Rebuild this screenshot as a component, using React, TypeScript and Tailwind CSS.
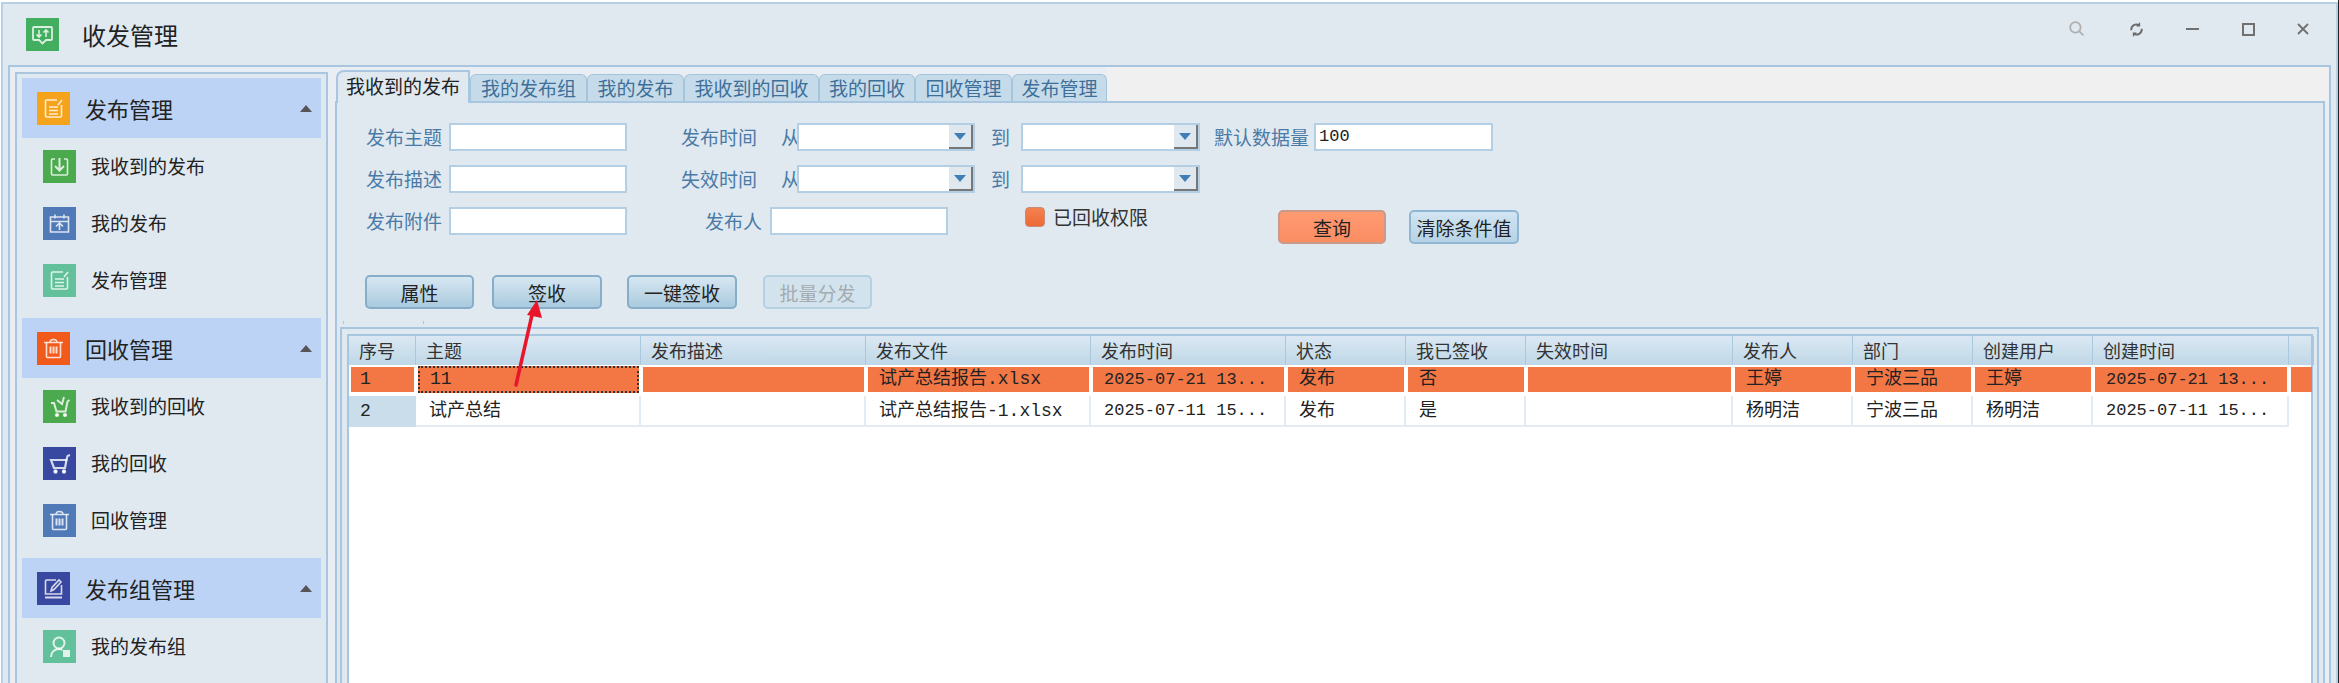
import React from 'react';

type IconKind = 'note' | 'inbox' | 'calendar' | 'trash' | 'cartFull' | 'cart' | 'pen' | 'user' | 'chat';

function TileIcon({ kind, color }: { kind: IconKind; color: string }) {
  return (
    <div className={`flex h-[33px] w-[33px] shrink-0 items-center justify-center ${color}`}>
      <svg viewBox="0 0 33 33" className="h-[33px] w-[33px]" fill="none" stroke="#ffffff" strokeOpacity="0.8" strokeWidth="1.6">
        {kind === 'note' && (
          <>
            <path d="M20 8H9.5a1 1 0 0 0-1 1v15a1 1 0 0 0 1 1h14a1 1 0 0 0 1-1V13" />
            <path d="M21 13l4-5" />
            <path d="M12 15h9M12 18.5h9M12 22h9" />
          </>
        )}
        {kind === 'inbox' && (
          <>
            <path d="M12 9H9.500a1 1 0 0 0-1 1v14a1 1 0 0 0 1 1h14a1 1 0 0 0 1-1V10a1 1 0 0 0-1-1H21" />
            <path d="M16.500 8v12M12 16l4.500 4.500L21 16" strokeWidth="2" />
          </>
        )}
        {kind === 'calendar' && (
          <>
            <path d="M7.500 10h18v15h-18zM7.500 14.500h18M12 7.500v4M21 7.500v4" />
            <path d="M16.500 23v-6.500M13 19.500l3.500-3.500 3.500 3.500" />
          </>
        )}
        {kind === 'trash' && (
          <>
            <path d="M7 10.500h19M13 10.500c0-4 7-4 7 0" />
            <path d="M9.500 10.500v14a1 1 0 0 0 1 1h12a1 1 0 0 0 1-1v-14" />
            <path d="M13.500 14.500v7M16.500 14.500v7M19.500 14.500v7" strokeWidth="2" />
          </>
        )}
        {kind === 'cartFull' && (
          <>
            <path d="M8 13h3l2.500 8.500h9l2-10 2-1.500" strokeWidth="2" />
            <path d="M14 10l5 4 2-7" strokeWidth="2" />
            <circle cx="14" cy="25" r="1.300" fill="#fff" />
            <circle cx="22" cy="25" r="1.300" fill="#fff" />
          </>
        )}
        {kind === 'cart' && (
          <>
            <path d="M8 13h15.500l-1.500 8H11z" strokeWidth="2.200" />
            <path d="M23 14l1.500-5 2.500-1" strokeWidth="2" />
            <circle cx="12.500" cy="24.500" r="1.400" fill="#fff" />
            <circle cx="21" cy="24.500" r="1.400" fill="#fff" />
          </>
        )}
        {kind === 'pen' && (
          <>
            <path d="M19 8H9.500a1 1 0 0 0-1 1v13h16v-9" />
            <path d="M14 19l1-3.500 7-7.500 2 2-7 7.500z" />
            <path d="M8 25.500h17" strokeWidth="2" />
          </>
        )}
        {kind === 'user' && (
          <>
            <circle cx="16" cy="13" r="5.500" strokeWidth="2" />
            <path d="M8 27c0-5 3.500-8 8-8 1.500 0 2.500.3 3.500.8" strokeWidth="2" />
            <path d="M20 20h7v7h-7z" fill="#fff" fillOpacity="0.8" stroke="none" />
          </>
        )}
        {kind === 'chat' && (
          <>
            <path d="M8 9h17a1 1 0 0 1 1 1v11a1 1 0 0 1-1 1h-5l-3.500 3.500L13 22H8a1 1 0 0 1-1-1V10a1 1 0 0 1 1-1z" strokeWidth="1.800" />
            <path d="M13 12v7M10.500 16.500L13 19l2.500-2.500M20 19v-7M17.500 14.500L20 12l2.500 2.500" />
          </>
        )}
      </svg>
    </div>
  );
}

function SideHeader({ kind, color, title }: { kind: IconKind; color: string; title: string }) {
  return (
    <div className="flex h-[60px] items-center bg-[#bcd3f5] pl-[15px] pr-[9px]">
      <TileIcon kind={kind} color={color} />
      <span className="ml-[15px] flex-1 text-[22px] text-[#222222]">{title}</span>
      <svg viewBox="0 0 12 7" className="h-[7px] w-[12px]">
        <path d="M6 0l6 7H0z" fill="#555555" />
      </svg>
    </div>
  );
}

function SideItem({ kind, color, title }: { kind: IconKind; color: string; title: string }) {
  return (
    <div className="flex h-[57px] items-center pl-[21px]">
      <TileIcon kind={kind} color={color} />
      <span className="ml-[15px] text-[19px] text-[#222222]">{title}</span>
    </div>
  );
}

function Label({ className, children }: { className: string; children: React.ReactNode }) {
  return <span className={`shrink-0 whitespace-nowrap text-[19px] leading-[28px] text-[#4a7ba6] ${className}`}>{children}</span>;
}

function TextBox({ className, value }: { className: string; value?: string }) {
  return (
    <div className={`h-[28px] shrink-0 border-2 border-[#b4cee3] bg-white pl-[3px] font-['Liberation_Mono',monospace] text-[17px] leading-[24px] text-[#222222] ${className}`}>
      {value}
    </div>
  );
}

function DateBox({ className }: { className: string }) {
  return (
    <div className={`flex h-[28px] shrink-0 justify-end border-2 border-[#b4cee3] bg-white ${className}`}>
      <div className="flex w-[24px] items-center justify-center border-r-2 border-b-2 border-r-[#777777] border-b-[#777777] bg-[#dfe8ef]">
        <svg viewBox="0 0 12 7" className="h-[7px] w-[12px]">
          <path d="M0 0h12L6 7z" fill="#3f7fb5" />
        </svg>
      </div>
    </div>
  );
}

function ActionButton({ className, label }: { className: string; label: string }) {
  return (
    <button className={`h-[34px] shrink-0 rounded-[5px] border-2 border-[#86aec9] bg-gradient-to-b from-[#d6e7f2] to-[#aacade] text-[19px] leading-none text-[#222222] ${className}`}>
      {label}
    </button>
  );
}

const tabs = ['我的发布组', '我的发布', '我收到的回收', '我的回收', '回收管理', '发布管理'];
const tabWidths = ['w-[117px]', 'w-[97px]', 'w-[135px]', 'w-[96px]', 'w-[97px]', 'w-[95px]'];

const columnClass =
  'grid grid-cols-[67px_225px_225px_225px_195px_120px_120px_207px_120px_120px_120px_196px_25px]';

const headers = ['序号', '主题', '发布描述', '发布文件', '发布时间', '状态', '我已签收', '失效时间', '发布人', '部门', '创建用户', '创建时间', ''];

const rows = [
  ['1', '11', '', '试产总结报告.xlsx', '2025-07-21 13...', '发布', '否', '', '王婷', '宁波三品', '王婷', '2025-07-21 13...', ''],
  ['2', '试产总结', '', '试产总结报告-1.xlsx', '2025-07-11 15...', '发布', '是', '', '杨明洁', '宁波三品', '杨明洁', '2025-07-11 15...', ''],
];

function DataGrid() {
  return (
    <div className="h-full bg-white">
      <div className={`${columnClass} h-[29px] bg-gradient-to-b from-[#dbe8f3] to-[#bfd7e7]`}>
        {headers.map((h, i) => (
          <div key={i} className="border-r border-[#a9c8dd] pl-[10px] text-[18px] leading-[28px] text-[#333333]">
            {h}
          </div>
        ))}
      </div>
      <div className={`${columnClass} h-[29px] font-['Liberation_Mono','Noto_Sans_CJK_SC',monospace] text-[18px] text-[#222222]`}>
        {rows[0].map((c, i) => (
          <div key={i} className="flex p-[2px]">
            <div
              className={
                i === 0
                  ? 'flex-1 truncate bg-[#f27745] pl-[9px] leading-[25px]'
                  : i === 1
                    ? 'my-[-1px] flex-1 truncate border-2 border-dotted border-[#333333] bg-[#f27745] pl-[10px] leading-[23px]'
                    : i === 4 || i === 11
                      ? 'flex-1 truncate bg-[#f27745] pl-[11px] text-[17px] leading-[25px]'
                      : 'flex-1 truncate bg-[#f27745] pl-[11px] leading-[25px]'
              }
            >
              {c}
            </div>
          </div>
        ))}
      </div>
      <div className={`${columnClass} h-[33px] font-['Liberation_Mono','Noto_Sans_CJK_SC',monospace] text-[18px] text-[#222222]`}>
        {rows[1].map((c, i) => (
          <div
            key={i}
            className={
              i === 0
                ? 'mt-[2px] bg-[#c9deea] pl-[11px] leading-[30px]'
                : i === 12
                  ? ''
                  : i === 4 || i === 11
                    ? 'mt-[2px] truncate border-r-2 border-b-2 border-[#e3ecf4] pl-[13px] text-[17px] leading-[30px]'
                    : 'mt-[2px] truncate border-r-2 border-b-2 border-[#e3ecf4] pl-[13px] leading-[30px]'
            }
          >
            {c}
          </div>
        ))}
      </div>
    </div>
  );
}

function App() {
  return (
    <div className="relative h-[683px] w-[2339px] overflow-hidden border-r border-[#222222] bg-white pt-[2px] pl-px font-['Noto_Sans_CJK_SC','Liberation_Sans',sans-serif]">
      <div className="flex h-full flex-col border-t-2 border-r-2 border-l-2 border-[#b8d0e6] bg-[#e0e8f0]">
        {/* title bar */}
        <div className="flex h-[61px] shrink-0 items-center pl-[23px]">
          <TileIcon kind="chat" color="bg-[#43ae5f]" />
          <span className="ml-[23px] text-[24px] text-[#222222]">收发管理</span>
          <div className="mb-[11px] ml-auto mr-[6px] flex items-center">
            <div className="flex w-[60px] justify-center">
              <svg viewBox="0 0 20 20" className="h-[16px] w-[16px]" fill="none" stroke="#b0b0b0" strokeWidth="2.200">
                <circle cx="8" cy="8" r="6.500" />
                <path d="M13 13l5 5" />
              </svg>
            </div>
            <div className="flex w-[58px] justify-center">
              <svg viewBox="0 0 20 20" className="h-[15px] w-[15px]" fill="none" stroke="#6a6a6a" strokeWidth="2.400">
                <path d="M3 11a7 7 0 0 1 11-6.500M17 9a7 7 0 0 1-11 6.500" />
                <path d="M14 1v4h-4M6 19v-4h4" strokeWidth="1.800" />
              </svg>
            </div>
            <div className="flex w-[55px] justify-center">
              <div className="h-[2px] w-[13px] bg-[#707070]" />
            </div>
            <div className="flex w-[56px] justify-center">
              <div className="h-[13px] w-[13px] border-2 border-[#707070]" />
            </div>
            <div className="flex w-[54px] justify-center">
              <svg viewBox="0 0 12 12" className="h-[12px] w-[12px]" fill="none" stroke="#707070" strokeWidth="1.800">
                <path d="M1 1l10 10M11 1L1 11" />
              </svg>
            </div>
          </div>
        </div>

        {/* main panel */}
        <div className="mx-[5px] flex min-h-0 flex-1 border-x-2 border-t-2 border-[#a9c6e0] bg-[#e8eef4]">
          {/* sidebar */}
          <div className="ml-[5px] mt-[5px] w-[313px] shrink-0 border-x-2 border-t-2 border-[#a9c6e0] bg-[#e0e8f0] px-[5px] pt-[4px]">
            <SideHeader kind="note" color="bg-[#f5a31a]" title="发布管理" />
            <SideItem kind="inbox" color="bg-[#4caa4e]" title="我收到的发布" />
            <SideItem kind="calendar" color="bg-[#5079b8]" title="我的发布" />
            <SideItem kind="note" color="bg-[#62c09a]" title="发布管理" />
            <div className="mt-[9px]">
              <SideHeader kind="trash" color="bg-[#f25a1c]" title="回收管理" />
            </div>
            <SideItem kind="cartFull" color="bg-[#4caa4e]" title="我收到的回收" />
            <SideItem kind="cart" color="bg-[#38479f]" title="我的回收" />
            <SideItem kind="trash" color="bg-[#5079b8]" title="回收管理" />
            <div className="mt-[9px]">
              <SideHeader kind="pen" color="bg-[#38479f]" title="发布组管理" />
            </div>
            <SideItem kind="user" color="bg-[#62c09a]" title="我的发布组" />
          </div>

          {/* tabs and content */}
          <div className="ml-[6px] flex min-w-0 flex-1 flex-col">
            <div className="flex h-[34px] shrink-0 items-end pl-[2px]">
              <div className="z-10 mb-[-2px] h-[33px] w-[134px] shrink-0 rounded-tl-[8px] border-x-2 border-t-2 border-[#a9c6e0] bg-[#e0e8f0] pl-[8px] text-[19px] leading-[28px] text-[#222222]">
                我收到的发布
              </div>
              {tabs.map((t, i) => (
                <div
                  key={t}
                  className={`h-[27px] shrink-0 rounded-t-[6px] border-x border-t border-[#a5c4db] bg-[#c6dbe9] text-center text-[19px] leading-[25px] text-[#3d6f99] ${tabWidths[i]}`}
                >
                  {t}
                </div>
              ))}
              <div className="h-full flex-1 bg-[#f0f0f0]" />
            </div>

            <div className="ml-px mr-[4px] min-h-0 flex-1 border-x-2 border-t-2 border-[#a9c6e0] bg-[#e0e8f0]">
              {/* query form */}
              <div className="flex flex-col gap-[14px] pl-[29px] pt-[20px]">
                <div className="flex">
                  <Label className="w-[78px]">发布主题</Label>
                  <TextBox className="ml-[5px] w-[178px]" />
                  <Label className="ml-[54px] w-[78px]">发布时间</Label>
                  <Label className="ml-[22px] w-[16px]">从</Label>
                  <DateBox className="ml-0 w-[178px]" />
                  <Label className="ml-[16px] w-[18px]">到</Label>
                  <DateBox className="ml-[12px] w-[179px]" />
                  <Label className="ml-[14px] w-[96px]">默认数据量</Label>
                  <TextBox className="ml-[4px] w-[179px]" value="100" />
                </div>
                <div className="flex">
                  <Label className="w-[78px]">发布描述</Label>
                  <TextBox className="ml-[5px] w-[178px]" />
                  <Label className="ml-[54px] w-[78px]">失效时间</Label>
                  <Label className="ml-[22px] w-[16px]">从</Label>
                  <DateBox className="ml-0 w-[178px]" />
                  <Label className="ml-[16px] w-[18px]">到</Label>
                  <DateBox className="ml-[12px] w-[179px]" />
                </div>
                <div className="flex items-start">
                  <Label className="w-[78px]">发布附件</Label>
                  <TextBox className="ml-[5px] w-[178px]" />
                  <Label className="ml-[78px] w-[58px]">发布人</Label>
                  <TextBox className="ml-[7px] w-[178px]" />
                  <div className="ml-[77px] h-[20px] w-[20px] shrink-0 rounded-[4px] border border-[#c98a78] bg-gradient-to-b from-[#f58050] to-[#ec6a36]" />
                  <span className="ml-[8px] w-[95px] shrink-0 whitespace-nowrap text-[19px] leading-[20px] text-[#333333]">已回收权限</span>
                  <button className="ml-[130px] mt-[3px] h-[34px] w-[108px] shrink-0 rounded-[5px] border-2 border-[#c99a88] bg-gradient-to-b from-[#ff9a72] to-[#fb8d62] text-[19px] leading-none text-[#222222]">
                    查询
                  </button>
                  <button className="ml-[23px] mt-[3px] h-[34px] w-[110px] shrink-0 rounded-[5px] border-2 border-[#8fb6d2] bg-gradient-to-b from-[#d2e5f2] to-[#b6d2e6] text-[19px] leading-none text-[#222222]">
                    清除条件值
                  </button>
                </div>
              </div>

              {/* toolbar */}
              <div className="flex pl-[28px] pt-[31px]">
                <ActionButton className="w-[109px]" label="属性" />
                <ActionButton className="ml-[18px] w-[110px]" label="签收" />
                <ActionButton className="ml-[25px] w-[110px]" label="一键签收" />
                <button className="ml-[26px] h-[34px] w-[109px] shrink-0 rounded-[5px] border-2 border-[#b6d0e2] bg-[#d3e3ed] text-[19px] leading-none text-[#a3abb1]">
                  批量分发
                </button>
              </div>

              {/* grid */}
              <div className="flex h-[18px] items-end gap-[79px] pb-[3px] pl-[6px]">
                <div className="h-[3px] w-px bg-[#b4c4d2]" />
                <div className="h-[3px] w-px bg-[#b4c4d2]" />
              </div>
              <div className="ml-[3px] mr-[4px] h-[400px] border-x-2 border-t-2 border-[#a9c6e0] pl-[5px] pr-[4px] pt-[5px]">
                <div className="h-full border-x-2 border-t-2 border-[#a9c6e0]">
                  <DataGrid />
                </div>
              </div>
            </div>
          </div>
        </div>
      </div>

      {/* annotation arrow */}
      <svg className="pointer-events-none absolute left-0 top-0 h-[683px] w-[2339px]" viewBox="0 0 2339 683" fill="none">
        <path d="M516 385L532 315" stroke="#e8162a" strokeWidth="3.500" strokeLinecap="round" />
        <path d="M537 300L542 318L527 315z" fill="#e8162a" />
      </svg>
    </div>
  );
}

export default App;
